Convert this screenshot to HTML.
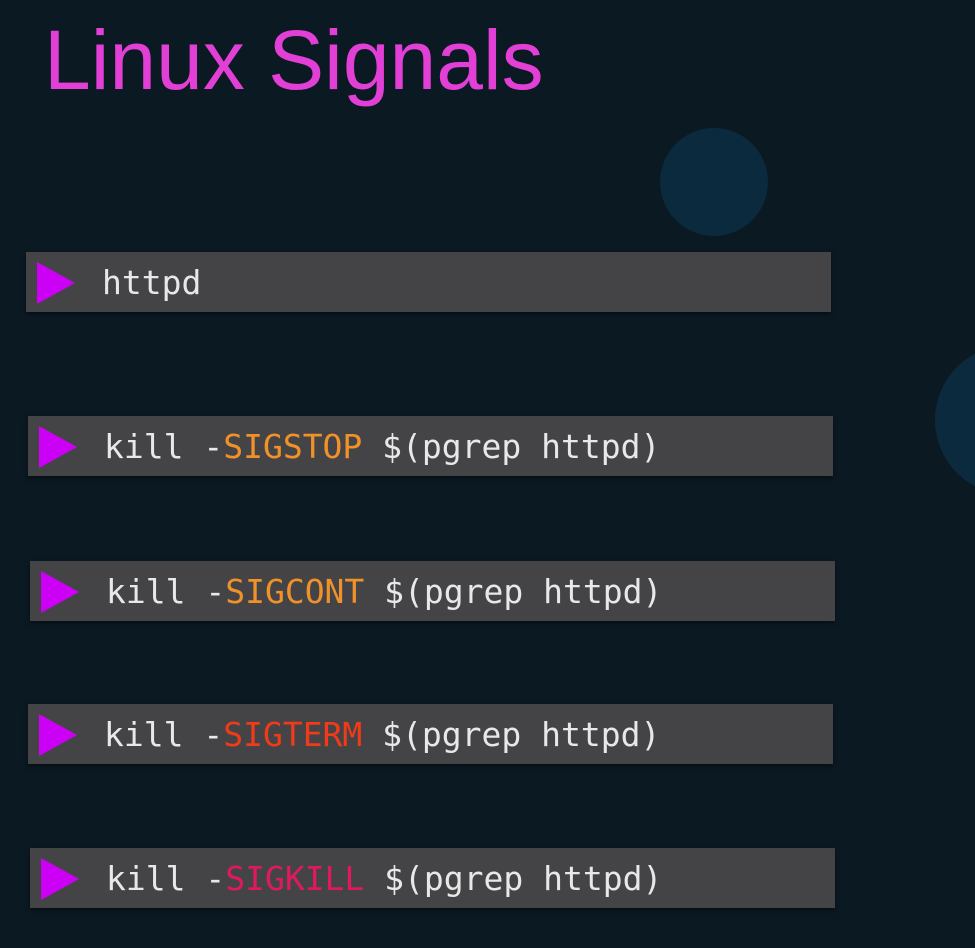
<!DOCTYPE html>
<html><head><style>
body{margin:0;width:975px;height:948px;background:#0b1923;position:relative;overflow:hidden;font-family:"Liberation Sans",sans-serif}
.t{position:absolute;left:44px;top:12px;font-size:84px;color:#e23fd6;letter-spacing:0}
.c{position:absolute;border-radius:50%;background:#0c2a3d}
.b{position:absolute;width:805px;height:60px;background:#444446;box-shadow:0 2px 4px rgba(0,0,0,.5)}
.tri{position:absolute;left:11px;top:10px;width:0;height:0;border-top:21px solid transparent;border-bottom:21px solid transparent;border-left:38px solid #cc00f5}
.x{position:absolute;left:76px;top:11px;font-family:"DejaVu Sans Mono",monospace;font-size:33px;color:#e8e8e8;white-space:pre;line-height:40px}
.o{color:#f0912a}.r{color:#f03a1a}.p{color:#e01860}
</style></head><body>
<div class="t">Linux Signals</div>
<div class="c" style="left:660px;top:128px;width:108px;height:108px"></div>
<div class="c" style="left:935px;top:345px;width:150px;height:150px"></div>
<div class="b" style="left:26px;top:252px"><div class="tri"></div><div class="x">httpd</div></div>
<div class="b" style="left:28px;top:416px"><div class="tri"></div><div class="x">kill -<span class="o">SIGSTOP</span> $(pgrep httpd)</div></div>
<div class="b" style="left:30px;top:561px"><div class="tri"></div><div class="x">kill -<span class="o">SIGCONT</span> $(pgrep httpd)</div></div>
<div class="b" style="left:28px;top:704px"><div class="tri"></div><div class="x">kill -<span class="r">SIGTERM</span> $(pgrep httpd)</div></div>
<div class="b" style="left:30px;top:848px"><div class="tri"></div><div class="x">kill -<span class="p">SIGKILL</span> $(pgrep httpd)</div></div>
</body></html>
